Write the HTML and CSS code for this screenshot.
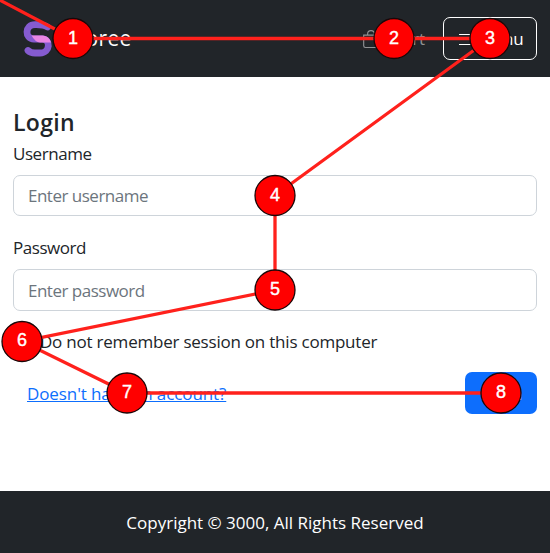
FILE: index.html
```html
<!DOCTYPE html>
<html lang="en">
<head>
<meta charset="utf-8">
<title>Storee - Login</title>
<link rel="stylesheet" href="styles.css">
</head>
<body>
<header class="navbar">
  <a class="brand">
    <svg class="logo" width="30" height="36" viewBox="0 0 30 36"><path d="M24.500 6C21 3.500 17 3.700 12 3.700C1.500 3.700 1.500 18 11 18H19C28 18 27.500 32 17 32H12Q7.500 32 5 29.500" fill="none" stroke="#855bd0" stroke-width="6.800" stroke-linecap="round"/><path d="M8.500 14.500H20Q26 15 28 21.500H17Q12 21 8.500 14.500Z" fill="#e986e4"/></svg>
    <span>Storee</span>
  </a>
  <nav class="actions">
    <a class="cart"><svg width="18" height="18" viewBox="0 0 16 16" fill="currentColor"><path d="M8 1a2.5 2.5 0 0 1 2.5 2.5V4h-5v-.5A2.5 2.5 0 0 1 8 1m3.5 3v-.5a3.5 3.5 0 1 0-7 0V4H1v10a2 2 0 0 0 2 2h10a2 2 0 0 0 2-2V4zM2 5h12v9a1 1 0 0 1-1 1H3a1 1 0 0 1-1-1z"/></svg><span>Cart</span></a>
    <button class="menu"><svg width="18" height="18" viewBox="0 0 18 18"><path d="M2 4.500H16M2 9.500H16M2 14.500H16" fill="none" stroke="currentColor" stroke-width="1.2"/></svg><span>Menu</span></button>
  </nav>
</header>
<main class="content">
  <h1>Login</h1>
  <form>
    <label class="label" for="user">Username</label>
    <input id="user" class="field" type="text" placeholder="Enter username">
    <label class="label second" for="pass">Password</label>
    <input id="pass" class="field tall" type="password" placeholder="Enter password">
    <label class="remember"><input type="checkbox"><span>Do not remember session on this computer</span></label>
    <div class="submit-row"><a class="register">Doesn't have an account?</a><button class="submit" type="button">Login</button></div>
  </form>
</main>
<footer class="footer"><span>Copyright © 3000, All Rights Reserved</span></footer>
<svg class="tab-order" width="550" height="553" viewBox="0 0 550 553">
  <path class="route" d="M-10 -5L73 38.5H490L275 195.500V290L22 341.500L127 393H501"/>
  <g class="stops"><circle cx="73" cy="38.500" r="20"/><circle cx="394" cy="38.500" r="20"/><circle cx="490" cy="38.500" r="20"/><circle cx="275" cy="195.500" r="20"/><circle cx="275" cy="290" r="20"/><circle cx="22" cy="341.500" r="20"/><circle cx="127" cy="393" r="20"/><circle cx="501" cy="393" r="20"/></g>
  <g class="numbers"><text x="73" y="43.500">1</text><text x="394" y="43.500">2</text><text x="490" y="43.500">3</text><text x="275" y="201">4</text><text x="275" y="294.500">5</text><text x="22" y="346">6</text><text x="127" y="398">7</text><text x="501" y="397.500">8</text></g>
</svg>
</body>
</html>
```
FILE: styles.css
```css
* { box-sizing: border-box; }
body {
  position: relative;
  margin: 0;
  height: 553px;
  display: flex;
  flex-direction: column;
  overflow: hidden;
  background: #fff;
  color: #212529;
  font: 17px/27px "Open Sans", "Noto Sans", sans-serif;
  letter-spacing: -0.1px;
}
.navbar {
  height: 77px;
  padding: 0 13px 0 23px;
  display: flex;
  align-items: center;
  justify-content: space-between;
  background: #212529;
  color: #fff;
}
.brand { display: flex; align-items: center; gap: 13px; font-size: 21px; letter-spacing: 0.3px; }
.logo { display: block; }
.actions { display: flex; align-items: center; gap: 18px; }
.cart { display: flex; align-items: center; gap: 12px; color: #909294; }
.menu {
  width: 94px;
  height: 43px;
  padding: 0;
  display: flex;
  align-items: center;
  justify-content: center;
  gap: 4px;
  border: 1px solid #fff;
  border-radius: 7px;
  background: transparent;
  color: #fff;
  font: inherit;
  letter-spacing: -0.2px;
}
.content { flex: 1; padding: 31px 13px 0; }
h1 { margin: 0; font-size: 23px; line-height: 28px; font-weight: 600; letter-spacing: 0.3px; }
.label { display: block; margin: 4px 0 8px; letter-spacing: -0.45px; }
.second { margin-top: 18px; }
.field {
  display: block;
  width: 100%;
  height: 41px;
  padding: 0 14px;
  border: 1px solid #ced4da;
  border-radius: 7px;
  font: inherit;
  letter-spacing: -0.5px;
}
.tall { height: 42px; }
.field::placeholder { color: #6c757d; opacity: 1; }
.remember { display: flex; align-items: center; gap: 9px; margin-top: 17px; letter-spacing: -0.22px; }
.remember input { width: 18px; height: 18px; margin: 0; }
.submit-row { display: flex; align-items: center; justify-content: space-between; margin-top: 17px; padding-left: 14px; }
.register { color: #0d6efd; text-decoration: underline; }
.submit {
  width: 72px;
  height: 42px;
  padding: 0;
  border: 0;
  border-radius: 7px;
  background: #0d6efd;
  color: #fff;
  font: inherit;
  letter-spacing: -0.3px;
}
.footer { height: 62px; display: flex; align-items: center; justify-content: center; background: #212529; color: #fff; letter-spacing: 0; }
.tab-order { position: absolute; inset: 0; pointer-events: none; }
.route { fill: none; stroke: #ff211c; stroke-width: 3.3; }
.stops { fill: #f00; stroke: #190708; stroke-width: 1.3; }
.numbers { fill: #fff; font: 18px "Liberation Sans", sans-serif; letter-spacing: 0; text-anchor: middle; stroke: #fff; stroke-width: 0.4; }
```
